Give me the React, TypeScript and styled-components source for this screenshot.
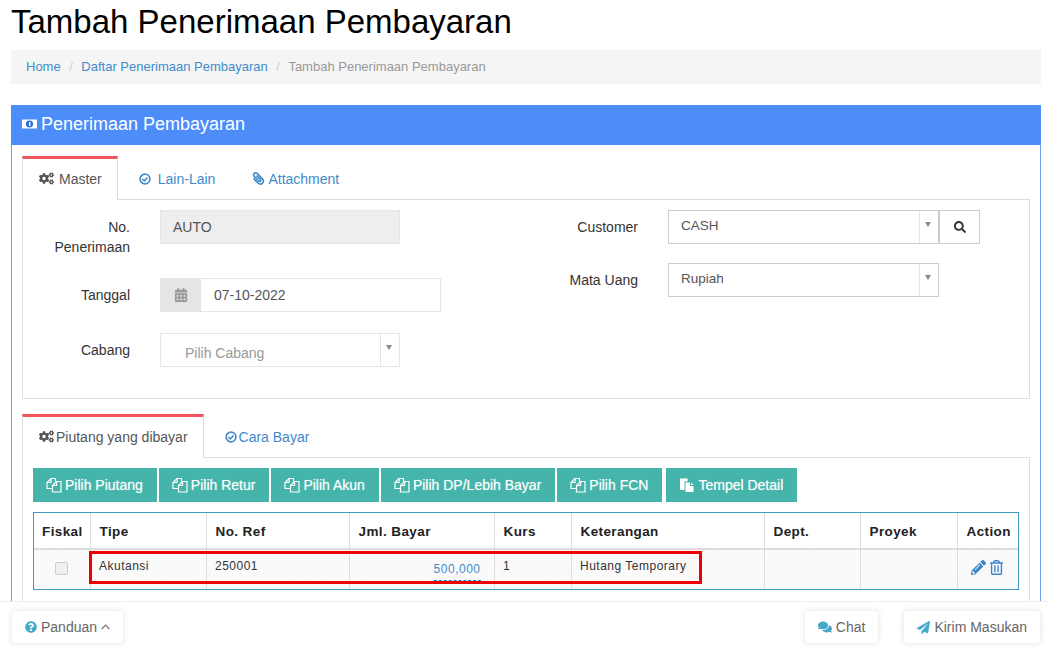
import styled, { createGlobalStyle } from "styled-components";
import {
  FaCalendarAlt,
  FaCogs,
  FaComments,
  FaPaperPlane,
  FaPaperclip,
  FaPencilAlt,
  FaQuestionCircle,
  FaRegTrashAlt,
  FaSearch,
} from "react-icons/fa";

const columns = [
  { label: "Fiskal", width: 56 },
  { label: "Tipe", width: 116 },
  { label: "No. Ref", width: 143 },
  { label: "Jml. Bayar", width: 145 },
  { label: "Kurs", width: 77 },
  { label: "Keterangan", width: 193 },
  { label: "Dept.", width: 96 },
  { label: "Proyek", width: 97 },
  { label: "Action", width: 61 },
];

const pickButtons = ["Pilih Piutang", "Pilih Retur", "Pilih Akun", "Pilih DP/Lebih Bayar", "Pilih FCN"];

const MoneyIcon = () => (
  <svg width="15" height="10" viewBox="0 0 15 10">
    <rect x="0" y="0.5" width="15" height="9" rx="0.5" fill="#fff" />
    <ellipse cx="7.5" cy="5" rx="3.6" ry="3.4" fill="#2f6fd8" />
    <rect x="7" y="3" width="1.4" height="4" fill="#fff" />
  </svg>
);

const CheckIcon = ({ size }: { size: number }) => (
  <svg width={size} height={size} viewBox="0 0 12 12" fill="none" stroke="currentColor">
    <circle cx="6" cy="6" r="4.9" strokeWidth="1.7" />
    <path d="M3.4 6l1.9 1.9 3.3-3.4" strokeWidth="1.6" />
  </svg>
);

const FilesIcon = () => (
  <svg width="16" height="16" viewBox="0 0 16 16" fill="none" stroke="#fff" strokeWidth="1.2">
    <path d="M6.5 11.5H1V5.5L5 1.5H9.5V4.5" />
    <path d="M5 1.5V5.5H1" />
    <path d="M6.5 15V8.5L10.5 4.5H15V15Z" />
    <path d="M10.5 4.5V8.5H6.5" />
  </svg>
);

const PasteIcon = () => (
  <svg width="16" height="16" viewBox="0 0 16 16">
    <path d="M1 1.5h7.5v3H5.5V13H1z" fill="#fff" />
    <path d="M6.5 5.5h4.5v3.5h3.5V15h-8z" fill="#fff" />
    <path d="M12 5.5l2.5 2.5H12z" fill="#fff" />
  </svg>
);

const ChevronUpIcon = () => (
  <svg width="9" height="6" viewBox="0 0 9 6" fill="none" stroke="#777" strokeWidth="1.2">
    <path d="M0.7 5L4.5 1.2 8.3 5" />
  </svg>
);

const App = () => {
  return (
    <Page>
      <GlobalStyle />
      <Main>
        <Title>Tambah Penerimaan Pembayaran</Title>
        <Breadcrumb>
          <Crumb>Home</Crumb>
          <Slash>/</Slash>
          <Crumb>Daftar Penerimaan Pembayaran</Crumb>
          <Slash>/</Slash>
          <CurrentCrumb>Tambah Penerimaan Pembayaran</CurrentCrumb>
        </Breadcrumb>
        <Panel>
          <PanelHeader>
            <MoneyIcon />
            Penerimaan Pembayaran
          </PanelHeader>
          <PanelBody>
            <Tabs>
              <Tab $active>
                <FaCogs size={15} color="#555" />
                <IconGap $w={5} />
                Master
              </Tab>
              <Tab>
                <CheckIcon size={12} />
                <IconGap $w={7} />
                Lain-Lain
              </Tab>
              <Tab>
                <ClipIcon size={13} />
                <IconGap $w={3} />
                Attachment
              </Tab>
            </Tabs>
            <TabContent>
              <FormColumn>
                <FormRow $gap={21}>
                  <Label $width={107}>No. Penerimaan</Label>
                  <ReadOnlyField>AUTO</ReadOnlyField>
                </FormRow>
                <FormRow $gap={21}>
                  <Label $width={107}>Tanggal</Label>
                  <DateGroup>
                    <DateAddon>
                      <FaCalendarAlt size={14} />
                    </DateAddon>
                    <DateValue>07-10-2022</DateValue>
                  </DateGroup>
                </FormRow>
                <FormRow $gap={0}>
                  <Label $width={107}>Cabang</Label>
                  <PlainSelect>
                    <Placeholder>Pilih Cabang</Placeholder>
                    <Arrow />
                  </PlainSelect>
                </FormRow>
              </FormColumn>
              <FormColumn>
                <FormRow $gap={19}>
                  <Label $width={112}>Customer</Label>
                  <Select>
                    <SelectText>CASH</SelectText>
                    <SelectArrow />
                  </Select>
                  <SearchButton>
                    <FaSearch size={12} />
                  </SearchButton>
                </FormRow>
                <FormRow $gap={0}>
                  <Label $width={112}>Mata Uang</Label>
                  <Select>
                    <SelectText>Rupiah</SelectText>
                    <SelectArrow />
                  </Select>
                </FormRow>
              </FormColumn>
            </TabContent>

            <LowerTabs>
              <Tab $active>
                <FaCogs size={15} color="#555" />
                <IconGap $w={2} />
                Piutang yang dibayar
              </Tab>
              <Tab>
                <CheckIcon size={12} />
                <IconGap $w={2} />
                Cara Bayar
              </Tab>
            </LowerTabs>
            <LowerContent>
              <Toolbar>
                {pickButtons.map((label) => (
                  <TealButton key={label}>
                    <FilesIcon />
                    {label}
                  </TealButton>
                ))}
                <PasteButton>
                  <PasteIcon />
                  Tempel Detail
                </PasteButton>
              </Toolbar>
              <TableWrap>
                <DetailTable>
                  <thead>
                    <tr>
                      {columns.map((col) => (
                        <HeadCell key={col.label} $width={col.width}>
                          {col.label}
                        </HeadCell>
                      ))}
                    </tr>
                  </thead>
                  <tbody>
                    <tr>
                      <CenterCell>
                        <CheckBox />
                      </CenterCell>
                      <BodyCell>Akutansi</BodyCell>
                      <BodyCell>250001</BodyCell>
                      <AmountCell>
                        <Amount>500,000</Amount>
                      </AmountCell>
                      <BodyCell>1</BodyCell>
                      <BodyCell>Hutang Temporary</BodyCell>
                      <BodyCell />
                      <BodyCell />
                      <CenterCell>
                        <ActionIcons>
                          <FaPencilAlt size={15} />
                          <FaRegTrashAlt size={15} />
                        </ActionIcons>
                      </CenterCell>
                    </tr>
                  </tbody>
                </DetailTable>
                <Highlight />
              </TableWrap>
            </LowerContent>
          </PanelBody>
        </Panel>
      </Main>
      <Footer>
        <FooterButton>
          <FaQuestionCircle size={12} color="#45a9c7" />
          Panduan
          <ChevronUpIcon />
        </FooterButton>
        <FooterRight>
          <FooterButton>
            <FaComments size={14} color="#45a9c7" />
            Chat
          </FooterButton>
          <FooterButton>
            <FaPaperPlane size={13} color="#45a9c7" />
            Kirim Masukan
          </FooterButton>
        </FooterRight>
      </Footer>
    </Page>
  );
};

export default App;

const GlobalStyle = createGlobalStyle`
  * {
    box-sizing: border-box;
  }
  body {
    margin: 0;
    background: #fff;
    font-family: "Liberation Sans", Arial, sans-serif;
    font-size: 14px;
    color: #333;
  }
`;

const Page = styled.div`
  height: 100vh;
  display: flex;
  flex-direction: column;
  overflow: hidden;
`;

const Main = styled.div`
  flex: 1;
  min-height: 0;
  overflow: hidden;
  padding: 0 9px 0 11px;
`;

const Title = styled.h1`
  margin: 0;
  height: 50px;
  font-size: 33px;
  font-weight: 400;
  line-height: 44px;
  color: #000;
`;

const Breadcrumb = styled.div`
  height: 34px;
  background: #f5f5f5;
  display: flex;
  align-items: center;
  padding: 0 15px 1px;
  font-size: 13px;
`;

const Crumb = styled.span`
  color: #428bca;
`;

const CurrentCrumb = styled.span`
  color: #999;
`;

const Slash = styled.span`
  color: #ccc;
  padding: 0 8.5px;
`;

const Panel = styled.div`
  margin-top: 21px;
  border-left: 1px solid #6ea0f5;
  border-right: 1px solid #6ea0f5;
`;

const PanelHeader = styled.div`
  height: 40px;
  margin: 0 -1px;
  background: #4c8dfa;
  color: #fff;
  display: flex;
  align-items: center;
  gap: 4px;
  padding: 0 0 2px 11px;
  font-size: 18px;
`;

const PanelBody = styled.div`
  padding: 11px 10px 0;
`;

const Tabs = styled.div`
  display: flex;
  gap: 4px;
  height: 44px;
`;

const LowerTabs = styled(Tabs)`
  margin-top: 15px;
`;

const Tab = styled.div<{ $active?: boolean }>`
  height: 44px;
  padding: 0 15px 2px 16px;
  display: flex;
  align-items: center;
  color: ${(p) => (p.$active ? "#555" : "#428bca")};
  background: ${(p) => (p.$active ? "#fff" : "transparent")};
  border-top: 3px solid ${(p) => (p.$active ? "#f2545b" : "transparent")};
  border-left: 1px solid ${(p) => (p.$active ? "#ddd" : "transparent")};
  border-right: 1px solid ${(p) => (p.$active ? "#ddd" : "transparent")};
  position: relative;
  z-index: ${(p) => (p.$active ? 1 : 0)};
`;

const IconGap = styled.span<{ $w: number }>`
  width: ${(p) => p.$w}px;
`;

const ClipIcon = styled(FaPaperclip)`
  transform: scaleX(-1);
`;

const TabContent = styled.div`
  margin-top: -1px;
  height: 200px;
  border: 1px solid #ddd;
  display: grid;
  grid-template-columns: 503px 1fr;
  padding-top: 10px;
`;

const LowerContent = styled.div`
  margin-top: -1px;
  border: 1px solid #ddd;
  padding: 10px 10px 20px;
`;

const FormColumn = styled.div`
  display: flex;
  flex-direction: column;
`;

const FormRow = styled.div<{ $gap: number }>`
  display: flex;
  align-items: flex-start;
  margin-bottom: ${(p) => p.$gap}px;
`;

const Label = styled.div<{ $width: number }>`
  width: ${(p) => p.$width}px;
  margin-right: 30px;
  padding: 7px 0 0 15px;
  text-align: right;
  line-height: 20px;
  color: #333;
`;

const ReadOnlyField = styled.div`
  width: 240px;
  height: 34px;
  background: #eee;
  border: 1px solid #e5e5e5;
  padding: 0 12px;
  line-height: 32px;
  color: #555;
`;

const DateGroup = styled.div`
  width: 281px;
  height: 34px;
  display: flex;
  border: 1px solid #e5e5e5;
`;

const DateAddon = styled.div`
  width: 41px;
  margin: -1px 0 -1px -1px;
  background: #e5e5e5;
  color: #999;
  display: flex;
  align-items: center;
  justify-content: center;
`;

const DateValue = styled.div`
  padding-left: 13px;
  line-height: 32px;
  color: #555;
`;

const PlainSelect = styled.div`
  width: 240px;
  height: 34px;
  border: 1px solid #e5e5e5;
  display: flex;
  justify-content: space-between;
`;

const Placeholder = styled.div`
  padding: 10px 0 0 24px;
  line-height: 18px;
  color: #999;
`;

const Arrow = styled.div`
  width: 19px;
  border-left: 1px solid #e5e5e5;
  position: relative;
  &::after {
    content: "";
    position: absolute;
    left: 5px;
    top: 11px;
    border: 3.5px solid transparent;
    border-top: 5px solid #888;
    border-bottom: 0;
  }
`;

const SelectArrow = styled(Arrow)`
  border-left-color: #e8e8e8;
`;

const Select = styled.div`
  width: 271px;
  height: 34px;
  border: 1px solid #ccc;
  display: flex;
  justify-content: space-between;
  font-size: 13.5px;
`;

const SelectText = styled.div`
  padding: 6px 0 0 12px;
  line-height: 18px;
  color: #555;
`;

const SearchButton = styled.div`
  width: 42px;
  height: 34px;
  border: 1px solid #ccc;
  border-left-width: 2px;
  margin-left: -1px;
  display: flex;
  align-items: center;
  justify-content: center;
  color: #333;
`;

const Toolbar = styled.div`
  display: flex;
  gap: 2px;
`;

const TealButton = styled.div`
  height: 34px;
  padding: 0 14px 0 13px;
  background: #45b5ab;
  color: #fff;
  display: flex;
  align-items: center;
  gap: 3px;
  font-size: 14px;
  text-shadow: 0 0 1px rgba(255, 255, 255, 0.5);
`;

const PasteButton = styled(TealButton)`
  margin-left: 2px;
`;

const TableWrap = styled.div`
  margin-top: 10px;
  width: 986px;
  border: 1px solid #3d9cc0;
  position: relative;
`;

const DetailTable = styled.table`
  width: 100%;
  table-layout: fixed;
  border-collapse: collapse;
`;

const HeadCell = styled.th<{ $width: number }>`
  width: ${(p) => p.$width}px;
  height: 36px;
  padding: 2px 9px 0;
  text-align: left;
  font-size: 13.5px;
  font-weight: 700;
  letter-spacing: 0.4px;
  color: #222;
  border-left: 1px solid #ddd;
  border-bottom: 2px solid #ddd;
  &:first-child {
    border-left: 0;
    padding: 2px 0 0 8px;
  }
`;

const BodyCell = styled.td`
  height: 40px;
  padding: 0 8px 7px 8.5px;
  font-size: 12px;
  letter-spacing: 0.5px;
  color: #333;
  border-left: 1px solid #ddd;
  background: repeating-linear-gradient(-45deg, #f7f7f7 0 1px, #fbfbfb 1px 3px);
  &:first-child {
    border-left: 0;
  }
`;

const CenterCell = styled(BodyCell)`
  text-align: center;
  padding: 0 0 4px;
`;

const AmountCell = styled(BodyCell)`
  text-align: right;
  padding: 0 13px 2px 0;
`;

const Amount = styled.span`
  display: inline-block;
  color: #428bca;
  border-bottom: 1px dashed #08c;
  padding-bottom: 4px;
  vertical-align: top;
  position: relative;
  top: 3px;
`;

const CheckBox = styled.span`
  display: inline-block;
  width: 13px;
  height: 13px;
  border: 1px solid #ccc;
  border-radius: 2px;
  background: #f0f0f0;
  vertical-align: middle;
`;

const ActionIcons = styled.span`
  display: inline-flex;
  gap: 3px;
  color: #3c86c9;
  vertical-align: middle;
`;

const Highlight = styled.div`
  position: absolute;
  left: 55px;
  top: 38px;
  width: 613px;
  height: 33px;
  border: 3px solid #ee0000;
`;

const Footer = styled.div`
  height: 48px;
  flex-shrink: 0;
  background: #fff;
  border-top: 1px solid #eee;
  display: flex;
  justify-content: space-between;
  align-items: flex-start;
  padding: 9px 10px 0 12px;
`;

const FooterRight = styled.div`
  display: flex;
  gap: 26px;
`;

const FooterButton = styled.div`
  height: 32px;
  padding: 0 13px;
  background: #fff;
  border-radius: 4px;
  display: flex;
  align-items: center;
  gap: 4px;
  color: #666;
  box-shadow: 0 0 7px rgba(0, 0, 0, 0.12);
`;
